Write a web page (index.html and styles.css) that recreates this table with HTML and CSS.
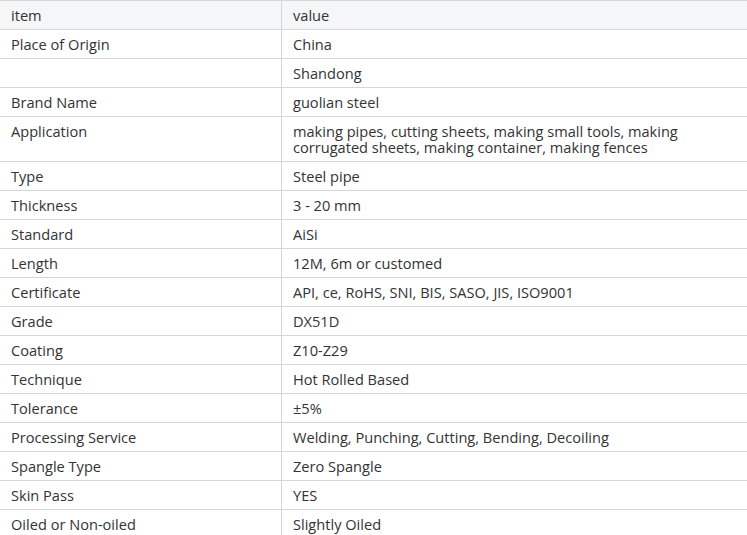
FILE: index.html
```html
<!DOCTYPE html>
<html>
<head>
<meta charset="utf-8">
<link rel="stylesheet" href="styles.css">
</head>
<body>
<table class="spec">
  <colgroup><col class="c1"><col class="c2"></colgroup>
  <thead>
    <tr><th>item</th><th>value</th></tr>
  </thead>
  <tbody>
    <tr><td>Place of Origin</td><td>China</td></tr>
    <tr><td></td><td>Shandong</td></tr>
    <tr><td>Brand Name</td><td>guolian steel</td></tr>
    <tr><td>Application</td><td>making pipes, cutting sheets, making small tools, making corrugated sheets, making container, making fences</td></tr>
    <tr><td>Type</td><td>Steel pipe</td></tr>
    <tr><td>Thickness</td><td>3 - 20 mm</td></tr>
    <tr><td>Standard</td><td>AiSi</td></tr>
    <tr><td>Length</td><td>12M, 6m or customed</td></tr>
    <tr><td>Certificate</td><td>API, ce, RoHS, SNI, BIS, SASO, JIS, ISO9001</td></tr>
    <tr><td>Grade</td><td>DX51D</td></tr>
    <tr><td>Coating</td><td>Z10-Z29</td></tr>
    <tr><td>Technique</td><td>Hot Rolled Based</td></tr>
    <tr><td>Tolerance</td><td>±5%</td></tr>
    <tr><td>Processing Service</td><td>Welding, Punching, Cutting, Bending, Decoiling</td></tr>
    <tr><td>Spangle Type</td><td>Zero Spangle</td></tr>
    <tr><td>Skin Pass</td><td>YES</td></tr>
    <tr><td>Oiled or Non-oiled</td><td>Slightly Oiled</td></tr>
  </tbody>
</table>
</body>
</html>
```
FILE: styles.css
```css
html, body {
  margin: 0;
  padding: 0;
  background: #fff;
  overflow: hidden;
}
body {
  font-family: "Open Sans", "Noto Sans", sans-serif;
  font-size: 14.6px;
  color: #333;
}
.spec {
  border-collapse: collapse;
  table-layout: fixed;
  width: 750px;
  margin-left: -1px;
}
.c1 { width: 282px; }
.spec th, .spec td {
  border: 1px solid #d6d6d6;
  padding: 6px 10px 6px 11px;
  line-height: 16px;
  height: 16px;
  text-align: left;
  font-weight: normal;
  vertical-align: top;
}
.spec thead th {
  background: #f5f6f8;
}
```
